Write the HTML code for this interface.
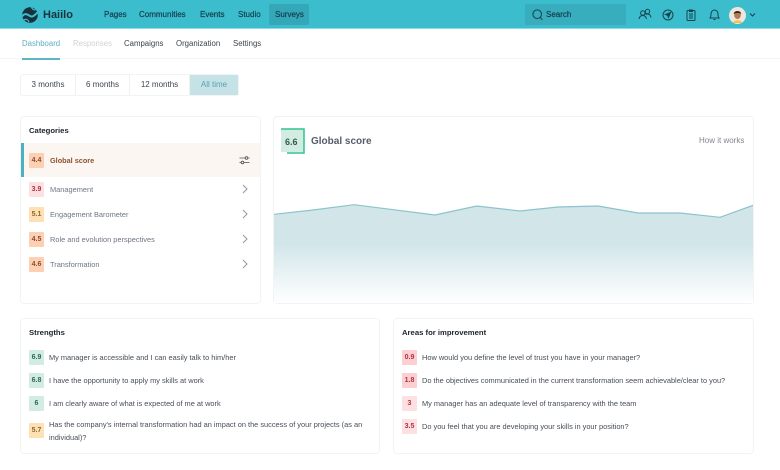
<!DOCTYPE html>
<html><head><meta charset="utf-8">
<style>
html,body{margin:0;padding:0;background:#fff;}
#p{position:relative;width:780px;height:470px;overflow:hidden;background:#fff;font-family:"Liberation Sans",sans-serif;filter:blur(.35px);}
#p div,#p span.t{position:absolute;white-space:nowrap;}
.t{line-height:12px;}
.n{font-size:8px;color:#143f4b;top:9px;line-height:12px;-webkit-text-stroke:.2px #143f4b}
.s{font-size:7.800px;top:38px;line-height:12px;color:#3c4450}
.tab{font-size:8px;top:75px;height:20px;line-height:20px;text-align:center;color:#3c4450;border-right:1px solid #f0f1f2;box-sizing:border-box}
.card{background:#fff;border:1px solid #f2f3f4;border-radius:4px;box-sizing:border-box}
.h{font-size:7.700px;font-weight:bold;color:#20262e;line-height:12px}
.b{width:15px;height:15px;line-height:15px;text-align:center;font-size:7px;font-weight:bold;border-radius:1px}
.o{background:#fdd0b4;color:#8d4c2c}.r{background:#fde0e2;color:#b4303e}.y{background:#fde0b4;color:#90662a}
.g{background:#d3ece3;color:#2d6a53}.rr{background:#fccfd2;color:#b4303e}
.c{font-size:7.400px;color:#6d7684;line-height:12px}
.q{font-size:7.400px;color:#474e58;line-height:13px}
</style></head><body>
<div id="p">
<div style="left:0;top:0;width:780px;height:29px;background:#3bbdcd;border-bottom:1px solid #8fdae3;box-sizing:border-box"></div>
<svg style="position:absolute;left:22px;top:7px" width="16" height="16" viewBox="0 0 16 16"><circle cx="8" cy="8" r="7.800" fill="#17323d"/><path d="M0 9.500C3 5.500 5.500 7.500 8 9S12.500 8.500 16 5" stroke="#3bbdcd" stroke-width="2" fill="none"/><path d="M9.500 0C10 2 11.500 3 13.500 3" stroke="#3bbdcd" stroke-width="1.200" fill="none"/><path d="M2 13C4 11.500 6 12.500 7 15" stroke="#3bbdcd" stroke-width="1.200" fill="none"/></svg>
<div class="t" style="left:43px;top:8px;font-size:11px;line-height:14px;font-weight:bold;color:#17323d">Haiilo</div>
<div style="left:269px;top:4px;width:40px;height:21px;background:#34a8b8;border-radius:2px"></div>
<div class="n" style="left:104px">Pages</div>
<div class="n" style="left:139px">Communities</div>
<div class="n" style="left:200px">Events</div>
<div class="n" style="left:238px">Studio</div>
<div class="n" style="left:275px">Surveys</div>
<div style="left:525px;top:4px;width:101px;height:21px;background:#37adbd;border-radius:2px"></div>
<svg style="position:absolute;left:532px;top:9px" width="11" height="12" viewBox="0 0 11 12" fill="none" stroke="#17424e" stroke-width="1"><circle cx="5.200" cy="5.200" r="4.300"/><path d="M8.300 8.300L10.300 10.800"/></svg>
<div class="n" style="left:546px">Search</div>
<svg style="position:absolute;left:638px;top:8px" width="14" height="13" viewBox="0 0 14 13" fill="none" stroke="#17424e" stroke-width="1"><circle cx="4.800" cy="5" r="2.200"/><circle cx="9.500" cy="3.500" r="2.200"/><path d="M1 11C1.500 8 3 7.500 4.800 7.500S8 8.500 8.500 11M7.500 6.500C9.500 5.500 12.500 6 13 9.500"/></svg>
<svg style="position:absolute;left:662px;top:9px" width="12" height="12" viewBox="0 0 12 12" fill="none" stroke="#17424e" stroke-width="1"><circle cx="6" cy="6" r="5"/><path d="M3.500 5.500L8.500 3.500L6.500 8.500L5.700 6.300Z" fill="#17424e"/></svg>
<svg style="position:absolute;left:686px;top:9px" width="10" height="12" viewBox="0 0 10 12" fill="none" stroke="#17424e" stroke-width="1"><rect x="1" y="1.500" width="8" height="10" rx="1"/><path d="M3.500 1H6.500V2.500H3.500ZM3 5H7M3 7H7M3 9H7"/></svg>
<svg style="position:absolute;left:709px;top:9px" width="11" height="12" viewBox="0 0 11 12" fill="none" stroke="#17424e" stroke-width="1"><path d="M1 9C2 8 2 7 2 5C2 2.800 3.500 1 5.500 1S9 2.800 9 5C9 7 9 8 10 9Z"/><path d="M4.500 10.500H6.500"/></svg>
<svg style="position:absolute;left:729px;top:7px" width="17" height="17" viewBox="0 0 17 17"><circle cx="8.500" cy="8.500" r="8.500" fill="#efe5da"/><path d="M3.500 16C5 12.500 12 12.500 13.500 16Z" fill="#f2c14e"/><ellipse cx="8.500" cy="8" rx="3.300" ry="4" fill="#b47a55"/><path d="M4.800 7C4.500 3.500 12 3 12.200 7C10.500 5.500 7 5.500 4.800 7Z" fill="#2d2420"/></svg>
<svg style="position:absolute;left:749px;top:12px" width="7" height="6" viewBox="0 0 7 6" fill="none" stroke="#17424e" stroke-width="1"><path d="M1 1.500L3.500 4L6 1.500"/></svg>

<div style="left:0;top:58px;width:780px;height:1px;background:#f3f4f5"></div>
<div style="left:22px;top:58px;width:38px;height:1.500px;background:#5fb5c4"></div>
<div class="s" style="left:22px;color:#5fb0c0">Dashboard</div>
<div class="s" style="left:73px;color:#cfd3d7">Responses</div>
<div class="s" style="left:124px">Campaigns</div>
<div class="s" style="left:176px">Organization</div>
<div class="s" style="left:233px">Settings</div>

<div style="left:21px;top:75px;width:217px;height:20px;border-radius:2px;box-shadow:0 0 0 1px #f2f3f4"></div>
<div class="tab" style="left:21px;width:55px">3 months</div>
<div class="tab" style="left:76px;width:54px">6 months</div>
<div class="tab" style="left:130px;width:60px">12 months</div>
<div class="tab" style="left:190px;width:48px;background:#c5e2e6;color:#5a9fb0;border:0">All time</div>

<div class="card" style="left:20px;top:116px;width:241px;height:188px"></div>
<div class="h" style="left:29px;top:125px">Categories</div>
<div style="left:21px;top:143px;width:239px;height:34px;background:#fcf6f2"></div>
<div style="left:21px;top:143px;width:2.500px;height:34px;background:#4eb0bd"></div>
<div class="b o" style="left:29px;top:153px">4.4</div>
<div class="t" style="left:50px;top:155px;font-size:7.300px;font-weight:bold;color:#8d5230">Global score</div>
<svg style="position:absolute;left:239px;top:155px" width="11" height="11" viewBox="0 0 11 11" fill="none" stroke="#4a4f55" stroke-width=".8"><path d="M0.500 3H10.500M0.500 7.500H10.500"/><circle cx="7.500" cy="3" r="1.300" fill="#fcf6f2"/><circle cx="3.500" cy="7.500" r="1.300" fill="#fcf6f2"/></svg>

<div class="b r" style="left:29px;top:182px">3.9</div><div class="c" style="left:50px;top:184px">Management</div>
<div class="b y" style="left:29px;top:207px">5.1</div><div class="c" style="left:50px;top:209px">Engagement Barometer</div>
<div class="b o" style="left:29px;top:232px">4.5</div><div class="c" style="left:50px;top:234px">Role and evolution perspectives</div>
<div class="b o" style="left:29px;top:257px">4.6</div><div class="c" style="left:50px;top:259px">Transformation</div>
<svg style="position:absolute;left:241px;top:184px" width="8" height="90" viewBox="0 0 8 90" fill="none" stroke="#9197a0" stroke-width="1"><path d="M2 1L6 5L2 9M2 26L6 30L2 34M2 51L6 55L2 59M2 76L6 80L2 84"/></svg>

<div class="card" style="left:273px;top:116px;width:481px;height:188px"></div>
<svg style="position:absolute;left:274px;top:117px" width="479" height="186" viewBox="274 117 479 186">
<defs><linearGradient id="f" x1="0" y1="205" x2="0" y2="303" gradientUnits="userSpaceOnUse"><stop offset="0" stop-color="#d2e6ea"/><stop offset=".4" stop-color="#d2e6ea"/><stop offset="1" stop-color="#fff"/></linearGradient></defs>
<path d="M274 214.300L313 210L354 204.700L435 215L476.700 206L520 211L558 207L598 206L638 213L680 213L720 217.300L753 205.300V303H274Z" fill="url(#f)"/>
<path d="M274 214.300L313 210L354 204.700L435 215L476.700 206L520 211L558 207L598 206L638 213L680 213L720 217.300L753 205.300" fill="none" stroke="#8cc3cd" stroke-width="1.200"/>
</svg>
<div style="left:281px;top:129px;width:23px;height:23px;background:#d3ece3"></div>
<svg style="position:absolute;left:281px;top:128px" width="24" height="26" viewBox="0 0 24 26" fill="none" stroke="#2fc48c" stroke-width="1.500"><path d="M0 1H23V25H6"/></svg>
<div class="t" style="left:285px;top:136px;font-size:9px;font-weight:bold;color:#37594d">6.6</div>
<div class="t" style="left:311px;top:136px;font-size:10px;font-weight:bold;color:#555d69">Global score</div>
<div class="t" style="left:699px;top:135px;font-size:8px;color:#80868e">How it works</div>

<div class="card" style="left:20px;top:318px;width:360px;height:136px"></div>
<div class="h" style="left:29px;top:327px">Strengths</div>
<div class="b g" style="left:29px;top:350px">6.9</div><div class="q" style="left:49px;top:351px">My manager is accessible and I can easily talk to him/her</div>
<div class="b g" style="left:29px;top:373px">6.8</div><div class="q" style="left:49px;top:374px">I have the opportunity to apply my skills at work</div>
<div class="b g" style="left:29px;top:396px">6</div><div class="q" style="left:49px;top:397px">I am clearly aware of what is expected of me at work</div>
<div class="b y" style="left:29px;top:423px">5.7</div><div class="q" style="left:49px;top:418px;line-height:13px">Has the company's internal transformation had an impact on the success of your projects (as an<br>individual)?</div>

<div class="card" style="left:393px;top:318px;width:361px;height:136px"></div>
<div class="h" style="left:402px;top:327px">Areas for improvement</div>
<div class="b rr" style="left:402px;top:350px">0.9</div><div class="q" style="left:422px;top:351px">How would you define the level of trust you have in your manager?</div>
<div class="b rr" style="left:402px;top:373px">1.8</div><div class="q" style="left:422px;top:374px">Do the objectives communicated in the current transformation seem achievable/clear to you?</div>
<div class="b r" style="left:402px;top:396px">3</div><div class="q" style="left:422px;top:397px">My manager has an adequate level of transparency with the team</div>
<div class="b r" style="left:402px;top:419px">3.5</div><div class="q" style="left:422px;top:420px">Do you feel that you are developing your skills in your position?</div>
</div>
</body></html>
